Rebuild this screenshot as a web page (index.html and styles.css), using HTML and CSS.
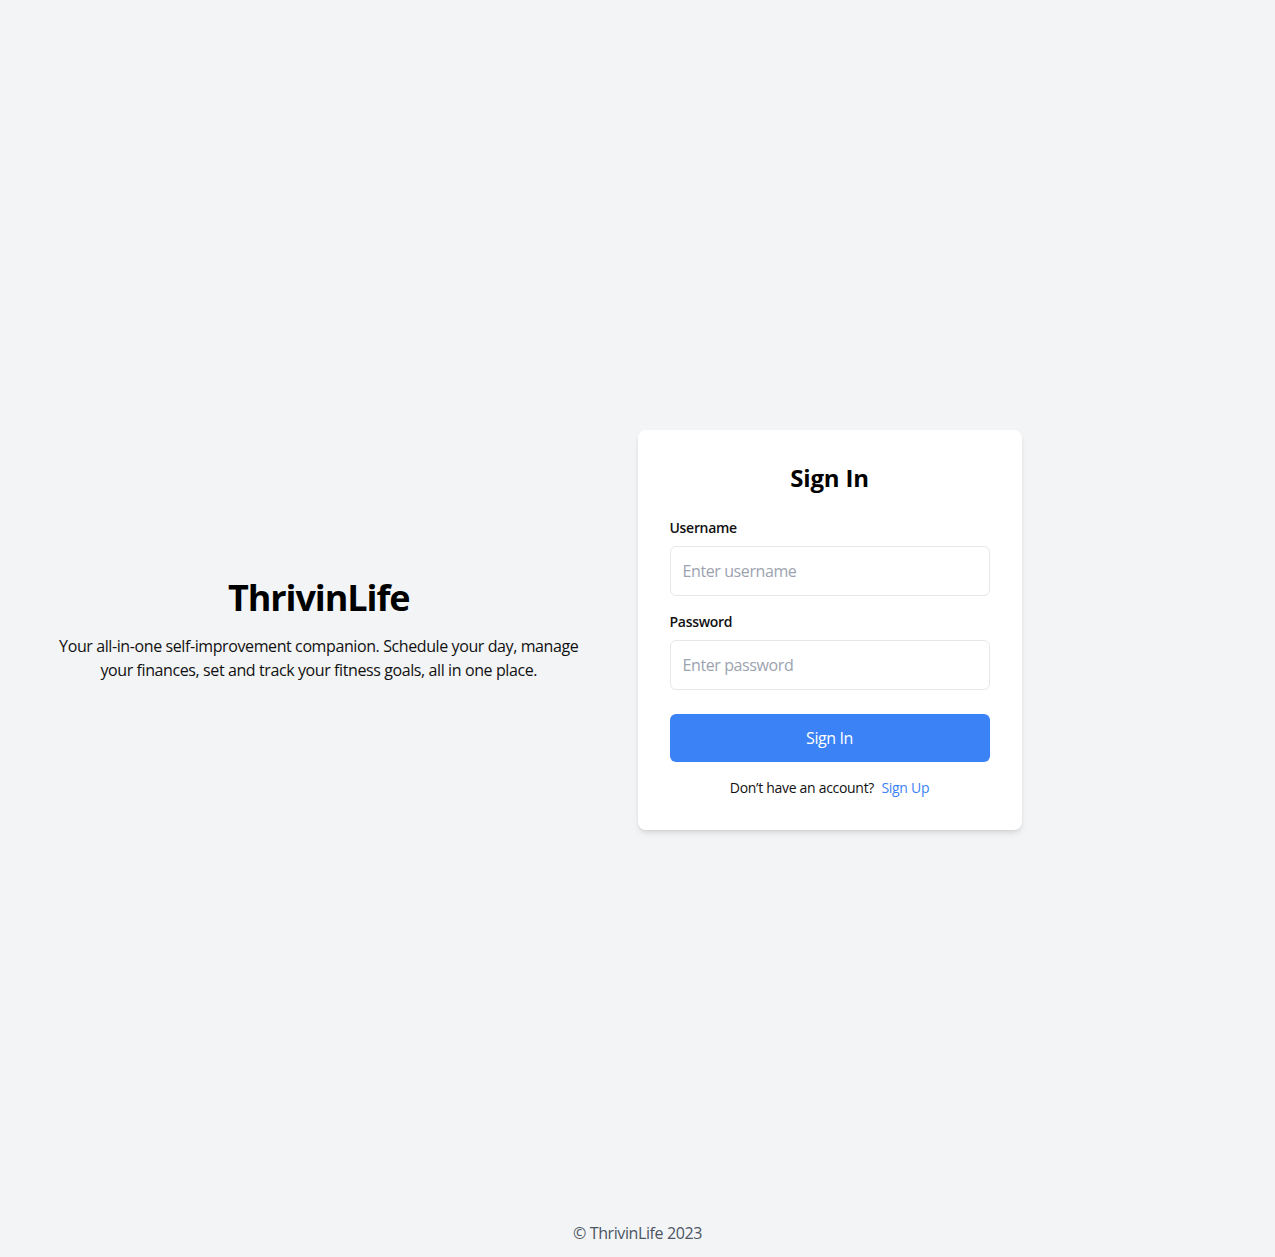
FILE: index.html
```html
<!DOCTYPE html>
<html lang="en">
<head>
<meta charset="utf-8">
<title>ThrivinLife - Sign In</title>
<link rel="stylesheet" href="styles.css">
</head>
<body>
<main class="page">
  <section class="intro">
    <h1 class="brand">ThrivinLife</h1>
    <p class="tagline">Your all-in-one self-improvement companion. Schedule your day, manage your finances, set and track your fitness goals, all in one place.</p>
  </section>
  <section class="auth">
    <form class="card">
      <h2 class="card-title">Sign In</h2>
      <div class="field">
        <label class="label" for="username">Username</label>
        <input class="input" id="username" type="text" placeholder="Enter username">
      </div>
      <div class="field field-last">
        <label class="label" for="password">Password</label>
        <input class="input" id="password" type="password" placeholder="Enter password">
      </div>
      <button class="btn" type="button">Sign In</button>
      <p class="switch">Don’t have an account? <a class="link" href="#">Sign Up</a></p>
    </form>
  </section>
</main>
<footer class="footer">© ThrivinLife 2023</footer>
</body>
</html>
```
FILE: styles.css
```css
* { box-sizing: border-box; }
html, body { margin: 0; padding: 0; }
body {
  background: #f3f4f6;
  font-family: "Open Sans", "Noto Sans", sans-serif;
  color: #111827;
  position: relative;
  min-height: 100vh;
  letter-spacing: -0.4px;
}
.page {
  display: grid;
  grid-template-columns: 1fr 1fr;
  align-items: center;
  min-height: 100vh;
  padding-top: 2px;
}
.intro {
  text-align: center;
  padding: 0 48px;
}
.brand {
  margin: 0 0 16px;
  font-size: 36px;
  line-height: 40px;
  font-weight: 700;
  color: #000;
  letter-spacing: -1.1px;
}
.tagline {
  margin: 0;
  font-size: 16px;
  line-height: 24px;
  color: #111;
}
.auth { display: flex; }
.card {
  width: 384px;
  background: #fff;
  border-radius: 8px;
  padding: 32px;
  box-shadow: 0 4px 6px -1px rgba(0,0,0,0.1), 0 2px 4px -2px rgba(0,0,0,0.1);
}
.card-title {
  margin: 0 0 24px;
  text-align: center;
  font-size: 24px;
  line-height: 32px;
  font-weight: 700;
  color: #000;
  letter-spacing: -0.2px;
}
.field { margin-bottom: 16px; }
.field-last { margin-bottom: 24px; }
.label {
  display: block;
  font-size: 14px;
  line-height: 20px;
  font-weight: 600;
  margin-bottom: 8px;
  color: #111;
  letter-spacing: -0.3px;
}
.input {
  display: block;
  width: 100%;
  border: 1px solid #e5e7eb;
  border-radius: 6px;
  padding: 12px;
  font-family: inherit;
  font-size: 16px;
  line-height: 24px;
  height: 50px;
  color: #111;
  background: #fff;
  outline: none;
  letter-spacing: -0.4px;
}
.input::placeholder { color: #9ca3af; }
.btn {
  display: block;
  width: 100%;
  height: 48px;
  border: 0;
  border-radius: 6px;
  background: #3b82f6;
  color: #fff;
  font-family: inherit;
  font-size: 16px;
  line-height: 24px;
  padding: 12px;
  cursor: pointer;
  letter-spacing: -0.4px;
}
.switch {
  margin: 16px 0 0;
  text-align: center;
  font-size: 14px;
  line-height: 20px;
  color: #111;
  letter-spacing: -0.3px;
}
.link {
  color: #3b82f6;
  text-decoration: none;
  margin-left: 4px;
}
.footer {
  position: absolute;
  left: 0;
  right: 0;
  bottom: 12px;
  text-align: center;
  font-size: 16px;
  line-height: 24px;
  color: #4b5563;
}
```
